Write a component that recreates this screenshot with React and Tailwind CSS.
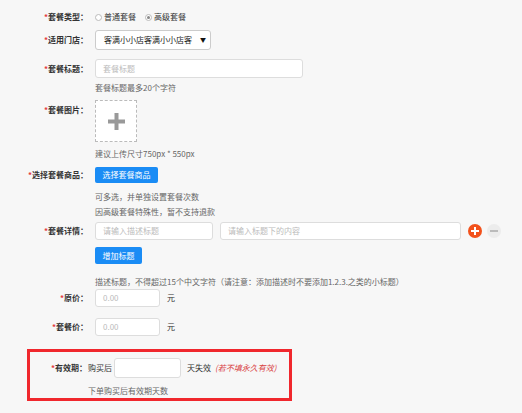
const Label = ({ children, className = '' }) => (
  <div className={`w-[88px] shrink-0 text-right font-bold text-[#333] ${className}`}>
    <span className="text-[#e4393c]">*</span>
    {children}：
  </div>
);

const Hint = ({ children, className = '' }) => (
  <div className={`pl-[95px] text-[#666] leading-[12px] ${className}`}>{children}</div>
);

const Radio = ({ checked, label }) => (
  <label className="flex items-center gap-[2px]">
    <span className="w-[7px] h-[7px] rounded-full border border-[#bbb] bg-white flex items-center justify-center">
      {checked && <span className="w-[3px] h-[3px] rounded-full bg-[#888]" />}
    </span>
    <span className="text-[#333]">{label}</span>
  </label>
);

const TextBox = ({ placeholder, className = '' }) => (
  <div className={`bg-white border border-[#ddd] rounded-[3px] flex items-center px-[7px] text-[#bbb] ${className}`}>
    {placeholder}
  </div>
);

const BlueButton = ({ children, className = '' }) => (
  <div className={`bg-[#1a8cf5] text-white rounded-[2px] flex items-center justify-center ${className}`}>
    {children}
  </div>
);

export default function App() {
  return (
    <div className="w-full h-[413px] bg-[#f7f7f7] text-[8px] leading-[12px] font-['Noto_Sans_CJK_SC',sans-serif] overflow-hidden pt-[9px]">
      {/* 套餐类型 */}
      <div className="flex items-center h-[16px]">
        <Label>套餐类型</Label>
        <div className="ml-[7px] flex items-center gap-[9px]">
          <Radio label="普通套餐" />
          <Radio checked label="高级套餐" />
        </div>
      </div>

      {/* 适用门店 */}
      <div className="flex items-center mt-[5px]">
        <Label>适用门店</Label>
        <div className="ml-[7px] w-[116px] h-[20px] bg-white border border-[#ccc] rounded-[3px] flex items-center pl-[8px] pr-[4px]">
          <span className="whitespace-nowrap text-[#222]">客满小小店客满小小店客</span>
          <span className="ml-auto text-[6px] text-[#111]">▼</span>
        </div>
      </div>

      {/* 套餐标题 */}
      <div className="flex items-center mt-[9px]">
        <Label>套餐标题</Label>
        <TextBox placeholder="套餐标题" className="ml-[7px] w-[208px] h-[19px]" />
      </div>
      <Hint className="mt-[4px]">套餐标题最多20个字符</Hint>

      {/* 套餐图片 */}
      <div className="flex items-start mt-[6px]">
        <Label className="mt-[4px]">套餐图片</Label>
        <div className="ml-[7px] w-[42px] h-[42px] border border-dashed border-[#bbb] bg-white flex items-center justify-center">
          <svg width="17" height="17" viewBox="0 0 17 17">
            <rect x="6.5" y="0" width="4" height="17" fill="#999" />
            <rect x="0" y="6.5" width="17" height="4" fill="#999" />
          </svg>
        </div>
      </div>
      <Hint className="mt-[6px]">建议上传尺寸750px * 550px</Hint>

      {/* 选择套餐商品 */}
      <div className="flex items-center mt-[7px]">
        <Label>选择套餐商品</Label>
        <BlueButton className="ml-[7px] w-[63px] h-[16px]">选择套餐商品</BlueButton>
      </div>
      <div className="pl-[95px] text-[#666] leading-[15px] mt-[6px]">
        <div>可多选，并单独设置套餐次数</div>
        <div>因高级套餐特殊性，暂不支持退款</div>
      </div>

      {/* 套餐详情 */}
      <div className="flex items-center mt-[3px]">
        <Label>套餐详情</Label>
        <TextBox placeholder="请输入描述标题" className="ml-[7px] w-[118px] h-[18px]" />
        <TextBox placeholder="请输入标题下的内容" className="ml-[7px] w-[241px] h-[18px]" />
        <div className="ml-[7px] w-[14px] h-[14px] rounded-full bg-[#f2511b] flex items-center justify-center">
          <svg width="8" height="8" viewBox="0 0 8 8">
            <rect x="3" y="0" width="2" height="8" fill="#fff" />
            <rect x="0" y="3" width="8" height="2" fill="#fff" />
          </svg>
        </div>
        <div className="ml-[5px] w-[14px] h-[14px] rounded-full bg-[#ececec] flex items-center justify-center">
          <div className="w-[8px] h-[1.5px] bg-[#bbb]" />
        </div>
      </div>
      <div className="pl-[95px] mt-[7px]">
        <BlueButton className="w-[47px] h-[17px]">增加标题</BlueButton>
      </div>
      <Hint className="mt-[12px] whitespace-nowrap">
        描述标题，不得超过15个中文字符（请注意：添加描述时不要添加1.2.3.之类的小标题）
      </Hint>

      {/* 原价 */}
      <div className="flex items-center mt-[1px]">
        <Label>原价</Label>
        <TextBox placeholder="0.00" className="ml-[7px] w-[65px] h-[18px]" />
        <span className="ml-[7px] text-[#333]">元</span>
      </div>

      {/* 套餐价 */}
      <div className="flex items-center mt-[11px]">
        <Label>套餐价</Label>
        <TextBox placeholder="0.00" className="ml-[7px] w-[65px] h-[18px]" />
        <span className="ml-[7px] text-[#333]">元</span>
      </div>

      {/* 有效期 */}
      <div className="ml-[27px] mt-[13px] w-[265px] h-[52px] border-[3px] border-[#f0272d] pt-[6px]">
        <div className="flex items-center">
          <div className="w-[57px] shrink-0 text-right font-bold text-[#333]">
            <span className="text-[#e4393c]">*</span>有效期：
          </div>
          <span className="ml-[1px] text-[#333]">购买后</span>
          <div className="ml-[2px] w-[67px] h-[20px] bg-white border border-[#ddd] rounded-[3px]" />
          <span className="ml-[6px] text-[#333]">天失效</span>
          <span className="ml-[4px] italic text-[#d9403f]">(若不填永久有效)</span>
        </div>
        <div className="pl-[58px] mt-[7px] text-[#666]">下单购买后有效期天数</div>
      </div>
    </div>
  );
}
